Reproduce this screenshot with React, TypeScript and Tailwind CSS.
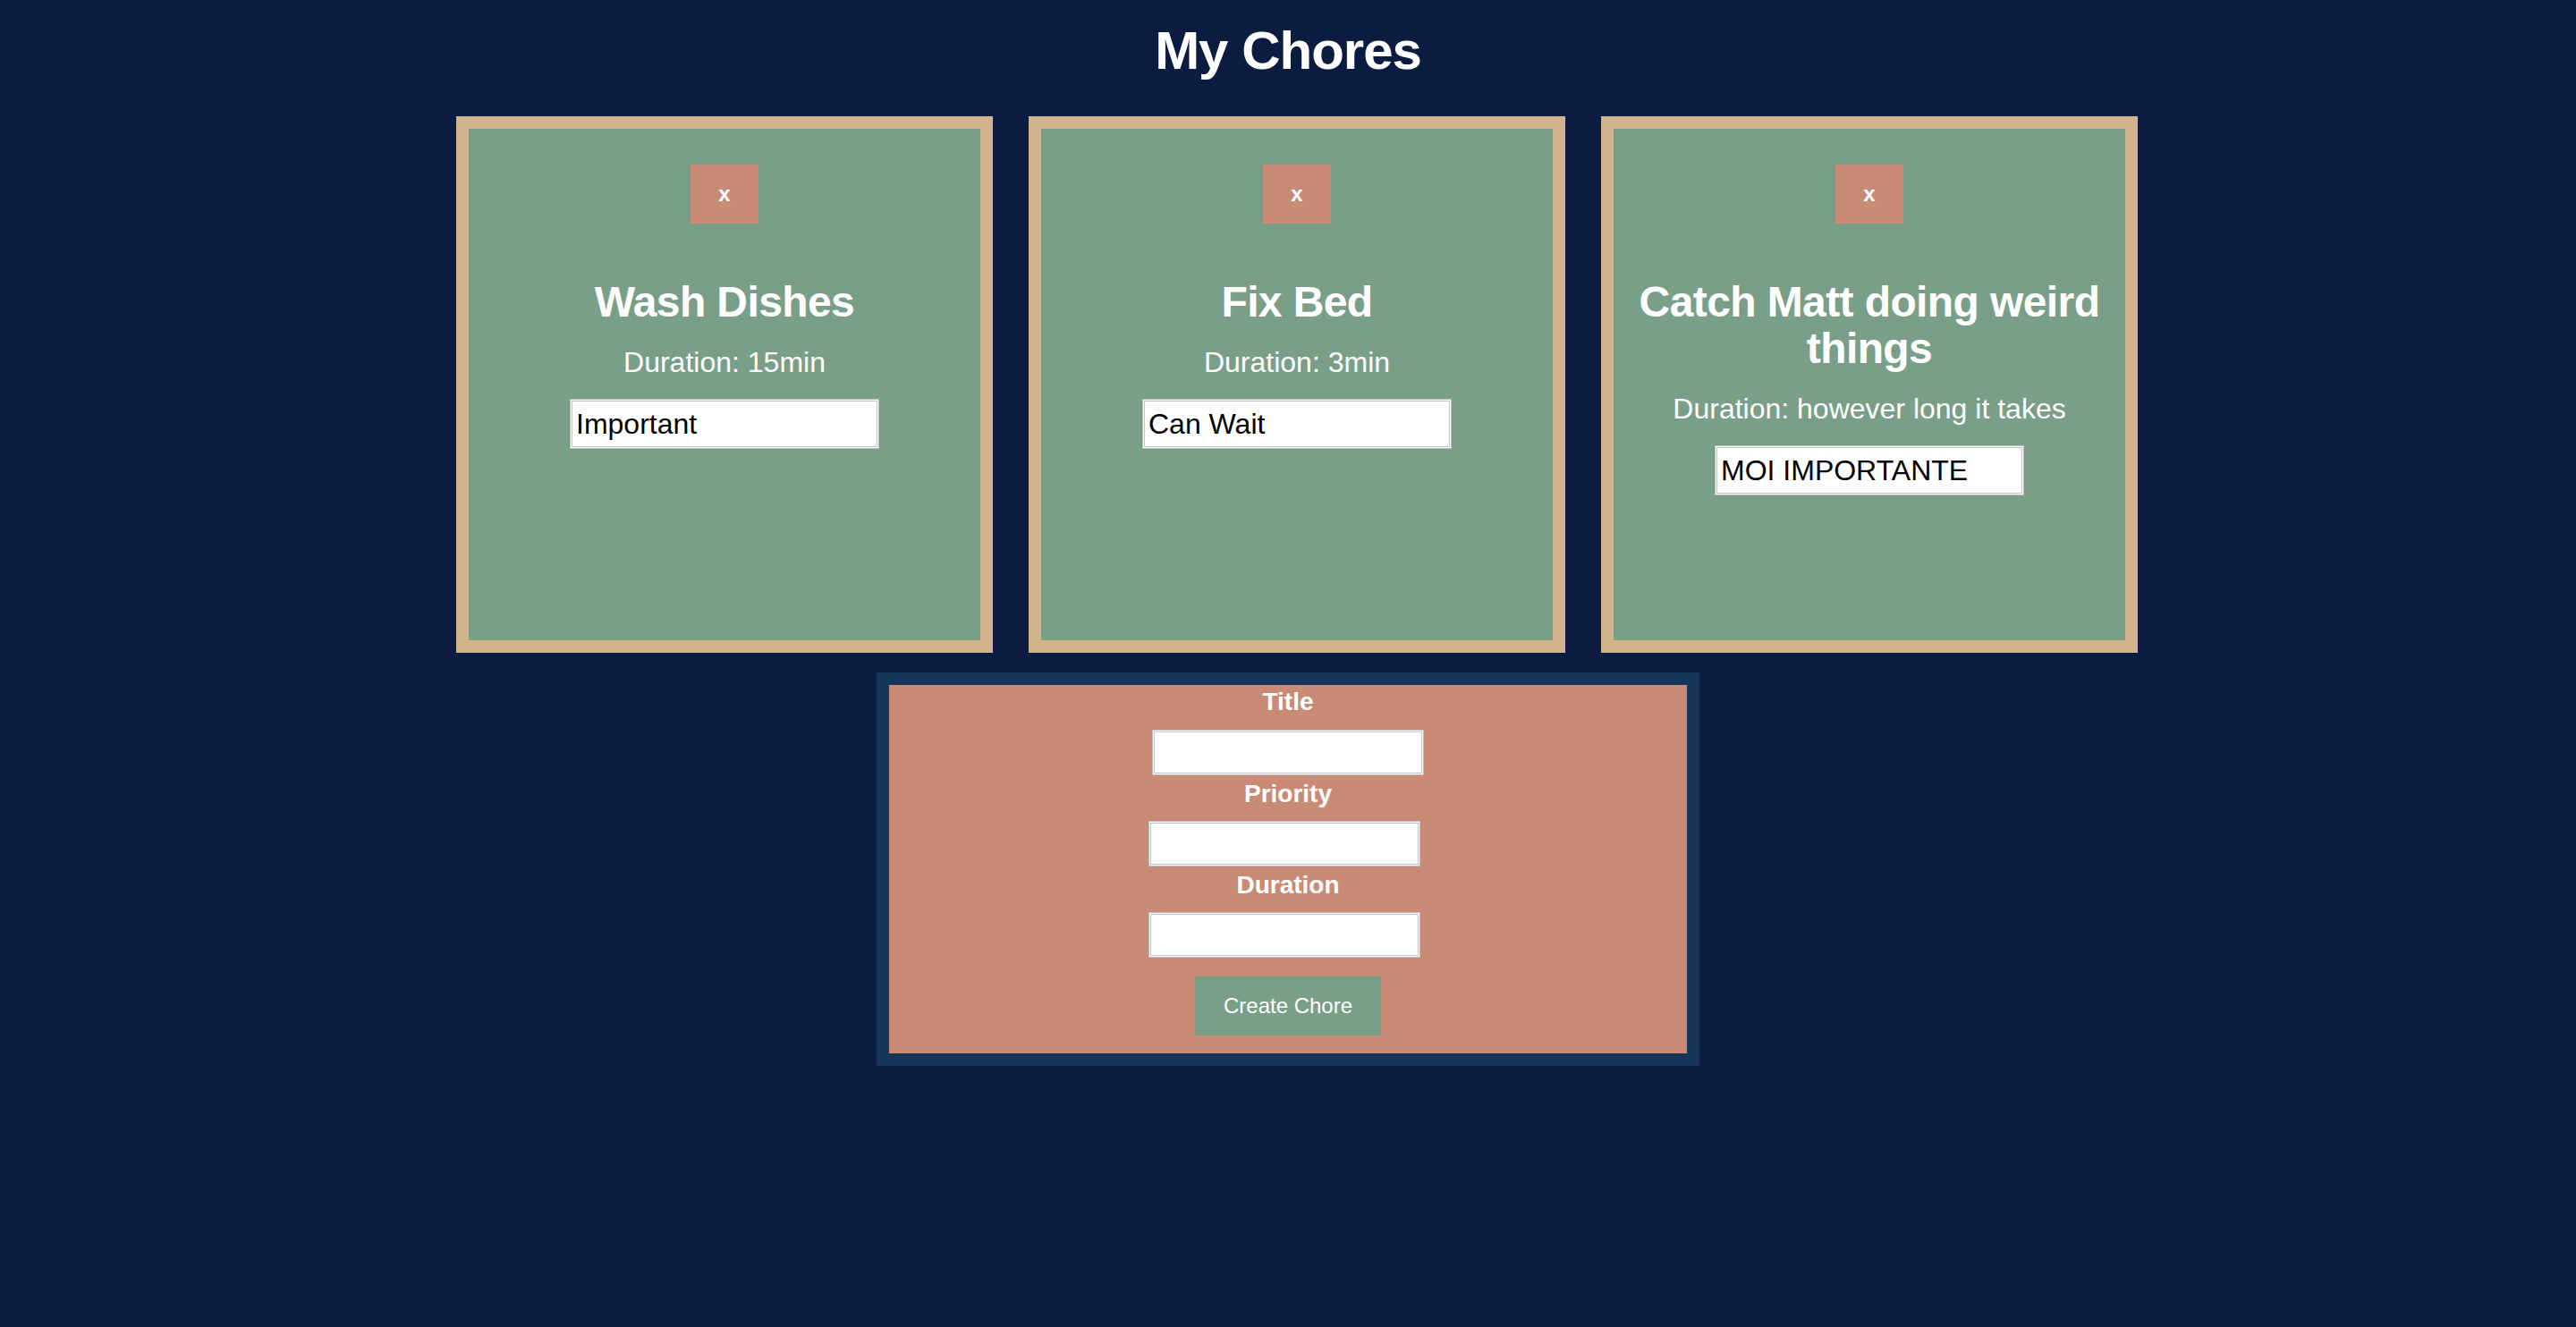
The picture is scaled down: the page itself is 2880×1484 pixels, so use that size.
import React from "react";

type Chore = { title: string; duration: string; priority: string };

const chores: Chore[] = [
  { title: "Wash Dishes", duration: "15min", priority: "Important" },
  { title: "Fix Bed", duration: "3min", priority: "Can Wait" },
  { title: "Catch Matt doing weird things", duration: "however long it takes", priority: "MOI IMPORTANTE" },
];

const inputBorder =
  "border border-[#bdbdbd] shadow-[inset_0_0_0_1px_#ffffff,inset_0_0_0_2px_#c4c4c4] bg-white outline-none";

function ChoreCard({ chore }: { chore: Chore }) {
  return (
    <div className="box-border w-[600px] h-[600px] shrink-0 border-[14px] border-[#d2b48c] bg-[#7a9f88] flex flex-col items-center pt-[40px] px-[10px]">
      <button className="w-[76px] h-[66px] bg-[#c98b75] text-white text-[24px] font-bold leading-none flex items-center justify-center">
        x
      </button>
      <h2 className="mt-[62px] text-[48px] leading-[52px] font-bold tracking-[-0.6px] text-center text-white">
        {chore.title}
      </h2>
      <p className="mt-[23px] text-[32px] leading-[36px] text-center text-white">
        Duration: {chore.duration}
      </p>
      <input
        readOnly
        value={chore.priority}
        className={`mt-[23px] w-[346px] h-[56px] pl-[6px] text-[32px] text-black ${inputBorder}`}
      />
    </div>
  );
}

export default function App() {
  return (
    <div className="min-h-[1484px] bg-[#0a1c3f] text-white font-['Liberation_Sans',Arial,sans-serif]">
      <h1 className="pt-[22px] text-center text-[60px] leading-[70px] font-bold tracking-[-1px]">My Chores</h1>
      <div className="mt-[38px] flex justify-center gap-[40px] pl-[20px]">
        {chores.map((c) => (
          <ChoreCard key={c.title} chore={c} />
        ))}
      </div>
      <div className="mx-auto mt-[22px] box-border w-[920px] border-[14px] border-[#163659] bg-[#c98b75] flex flex-col items-center pt-[3px] pb-[20px]">
        <label className="text-[28px] leading-[32px] font-bold">Title</label>
        <input className={`mt-[15px] w-[304px] h-[51px] ${inputBorder}`} />
        <label className="mt-[5px] text-[28px] leading-[32px] font-bold">Priority</label>
        <input className={`mt-[14px] mr-[8px] w-[304px] h-[51px] ${inputBorder}`} />
        <label className="mt-[5px] text-[28px] leading-[32px] font-bold">Duration</label>
        <input className={`mt-[14px] mr-[8px] w-[304px] h-[51px] ${inputBorder}`} />
        <button className="mt-[21px] w-[208px] h-[66px] bg-[#7a9f88] text-white text-[24px] leading-none">
          Create Chore
        </button>
      </div>
    </div>
  );
}
